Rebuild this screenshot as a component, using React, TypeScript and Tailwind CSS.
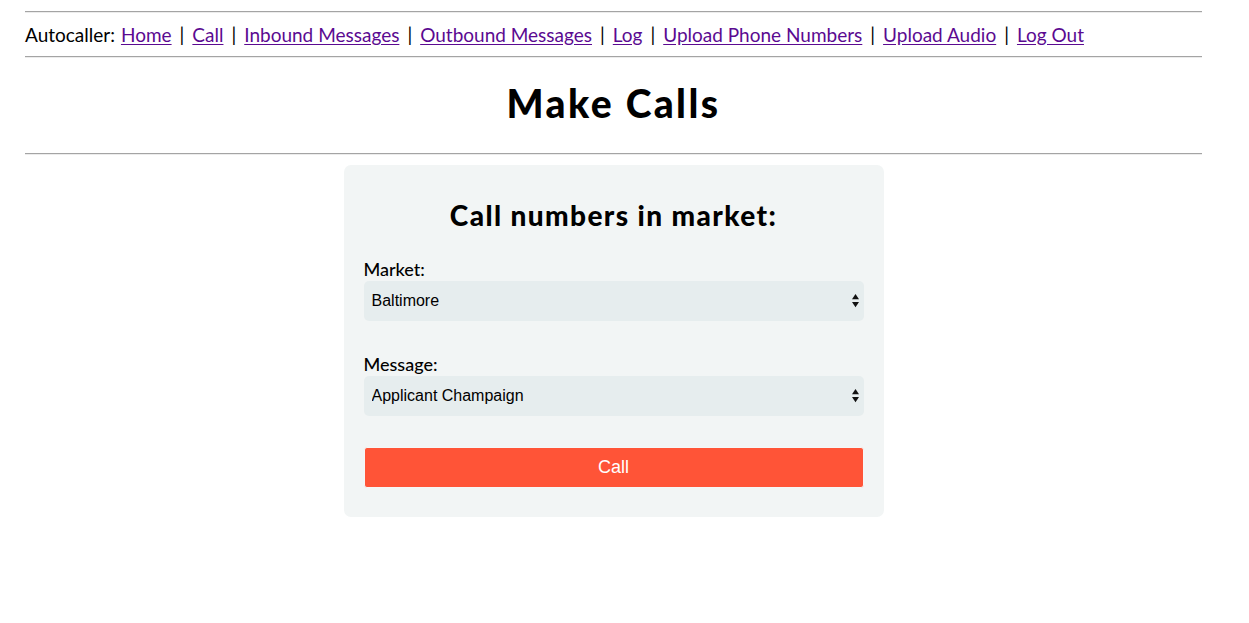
const links = [
  "Home",
  "Call",
  "Inbound Messages",
  "Outbound Messages",
  "Log",
  "Upload Phone Numbers",
  "Upload Audio",
  "Log Out",
];

function Rule() {
  return <div className="h-0 border-t border-t-[#a4a4a4] border-b border-b-[#ececec]" />;
}

function SelectArrows() {
  return (
    <svg
      viewBox="0 0 8 16"
      className="absolute right-[5px] top-1/2 -translate-y-1/2 w-[7px] h-[15px] pointer-events-none"
    >
      <polygon points="4,0 8,6 0,6" fill="#111" />
      <polygon points="0,9 8,9 4,15" fill="#111" />
    </svg>
  );
}

function Field({ label, value }: { label: string; value: string }) {
  return (
    <div className="flex flex-col">
      <label className="text-[18px] leading-[22px] font-medium text-black">{label}</label>
      <div className="relative mt-[1px]">
        <select
          defaultValue={value}
          className="w-full h-[40px] appearance-none bg-[#e6edee] rounded-[5px] pl-[8px] pr-6 text-[16px] text-black outline-none"
          style={{ fontFamily: '"Liberation Sans", Arial, sans-serif' }}
        >
          <option>{value}</option>
        </select>
        <SelectArrows />
      </div>
    </div>
  );
}

export default function App() {
  return (
    <div
      className="min-h-screen bg-white text-black"
      style={{ fontFamily: 'Lato, "DejaVu Sans", sans-serif' }}
    >
      <div className="ml-[25px] w-[1177px] pt-[11px]">
        <Rule />
        <nav className="h-[43px] flex items-center text-[19px] leading-none">
          <span>Autocaller:</span>
          {links.map((l, i) => (
            <span key={l} className="flex items-center">
              {i > 0 && <span className="mx-[8px]">|</span>}
              {i === 0 && <span className="w-[6px]" />}
              <a href="#" className="text-[#5b0a91] underline underline-offset-2">
                {l}
              </a>
            </span>
          ))}
        </nav>
        <Rule />
        <h1 className="h-[95px] flex items-center justify-center text-[39px] font-black tracking-[2.4px] pb-[4px]">
          Make Calls
        </h1>
        <Rule />

        <div className="flex justify-center pt-[10px]">
          <div className="w-[540px] h-[352px] bg-[#f2f5f5] rounded-[7px] px-[20px] pt-[32px]">
            <h2 className="text-center text-[28px] leading-[36px] font-black tracking-[1.4px]">
              Call numbers in market:
            </h2>
            <div className="mt-[25px] flex flex-col gap-[32px]">
              <Field label="Market:" value="Baltimore" />
              <Field label="Message:" value="Applicant Champaign" />
            </div>
            <button
              className="mt-[31px] w-full h-[41px] bg-[#ff5437] border border-[#f6f6f6] rounded-[3px] text-white text-[18px]"
              style={{ fontFamily: '"Liberation Sans", Arial, sans-serif' }}
            >
              Call
            </button>
          </div>
        </div>
      </div>
    </div>
  );
}
